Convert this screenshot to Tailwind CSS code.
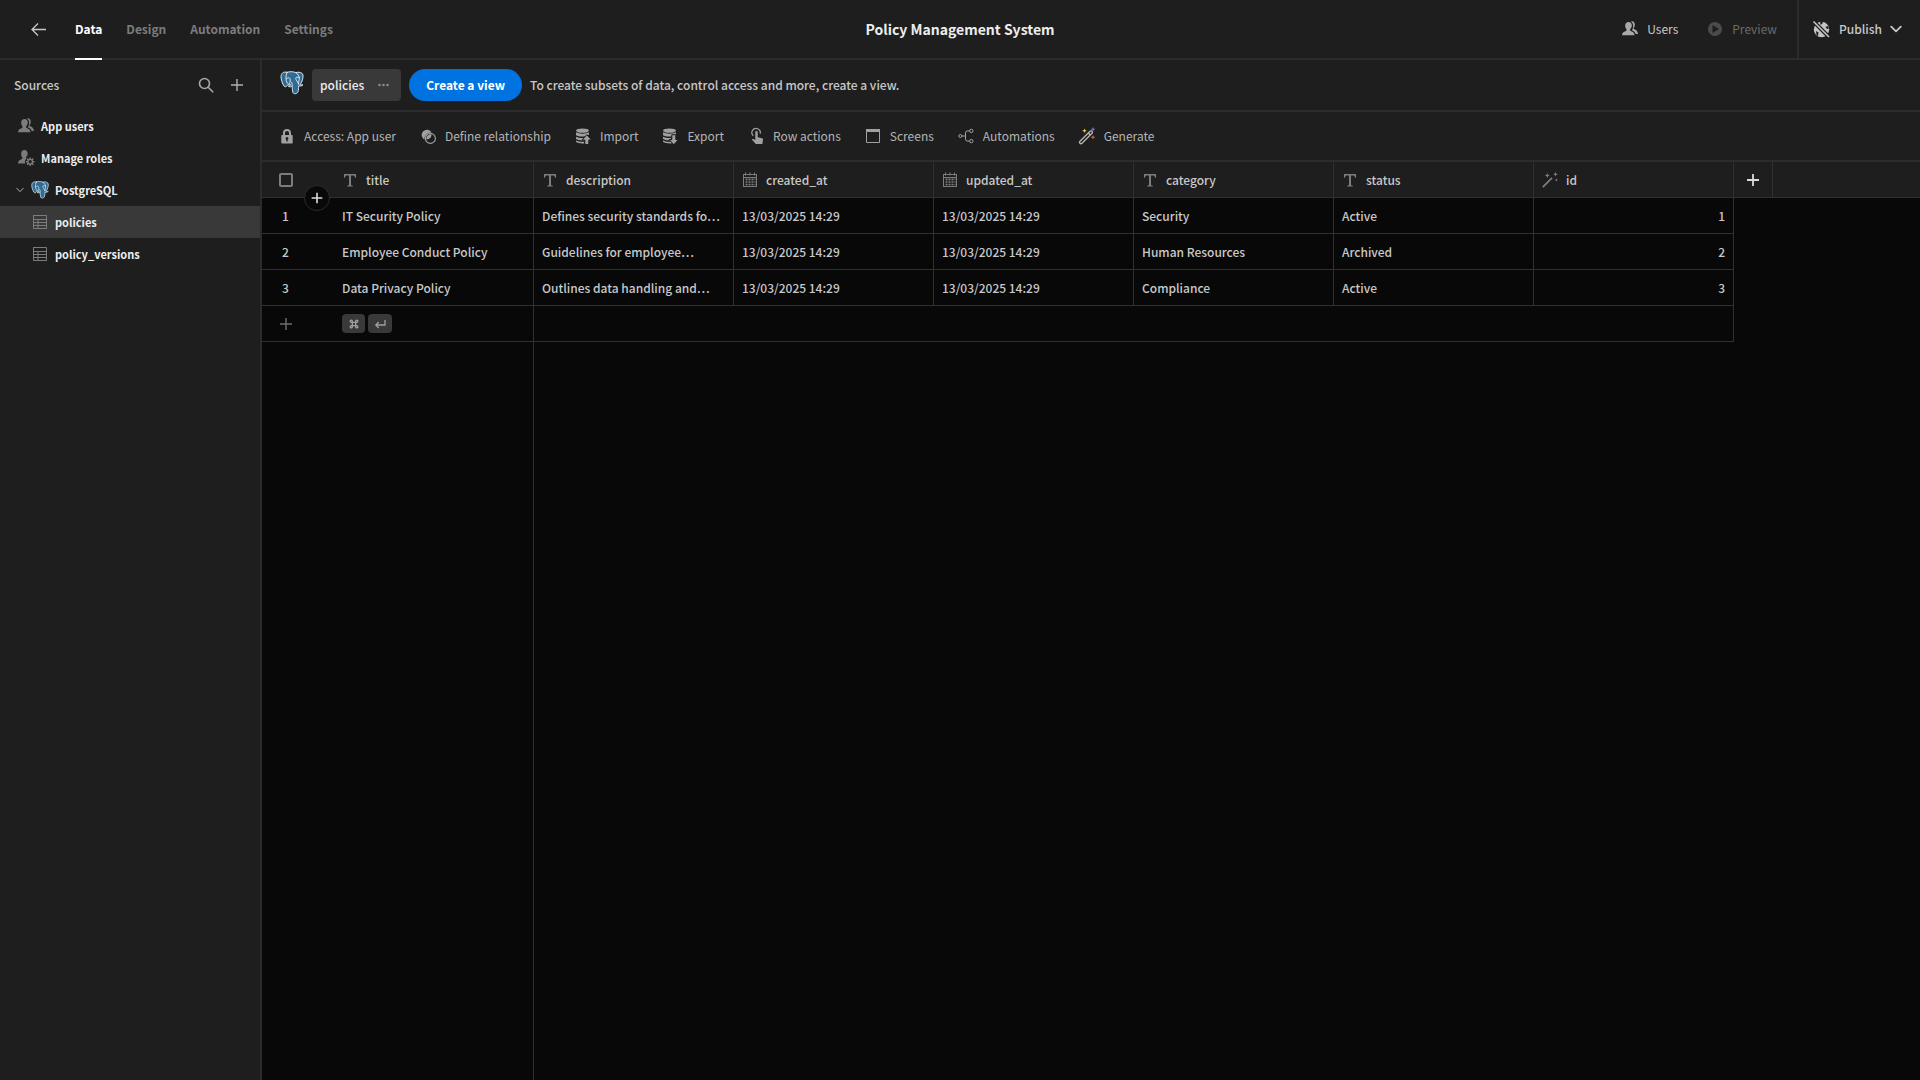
<!DOCTYPE html>
<html lang="en">
<head>
<meta charset="utf-8">
<title>Policy Management System</title>
<script src="https://cdn.jsdelivr.net/npm/@tailwindcss/browser@4"></script>
</head>
<body class="flex min-h-screen flex-col bg-[#080808] font-['Noto_Sans_CJK_SC','Noto_Sans',sans-serif] text-[12px] leading-5 text-[#c8c8c8]">
<svg class="hidden" aria-hidden="true">
  <defs>
    <symbol id="users" viewBox="0 0 18 18"><path fill="currentColor" d="M7.600 2C9.700 2 10.800 3.400 10.800 5.300c0 1.700-.7 2.900-1.500 3.800-.2.300-.3.500-.3.900 0 .5.200.8.700 1 2.300.8 3.700 1.800 3.800 4.300H1c.1-2.500 1.500-3.500 3.900-4.300.5-.2.700-.5.700-1 0-.4-.1-.6-.3-.9C4.500 8.200 4.200 7 4.200 5.300 4.200 3.400 5.500 2 7.600 2z"/><path fill="currentColor" d="M11 1.300c1.700 0 2.800 1.400 2.800 3.200 0 1.500-.4 2.600-1.100 3.400-.3.400-.2 1 .2 1.200 2.300.9 3.900 2.300 4.100 4.900h-2.400c-.4-1.900-1.800-3-3.700-3.800.7-1 1.200-2.400 1.200-4.500 0-1.900-.7-3.300-2-4 .3-.3.600-.4.900-.4z"/></symbol>
    <symbol id="roles" viewBox="0 0 18 18"><path fill="currentColor" d="M7.400 1C9.400 1 10.600 2.400 10.600 4.400c0 1.800-.7 3-1.500 3.800-.3.400-.2 1.200.4 1.400-1.500 1.300-1.900 3.200-1.300 5H1c.1-2.600 1.500-3.800 3.900-4.600.6-.3.700-1.200.3-1.700C4.500 7.400 4.200 6.200 4.200 4.400 4.200 2.400 5.400 1 7.400 1z"/><circle cx="13.200" cy="12.700" r="2.300" fill="none" stroke="currentColor" stroke-width="1.400"/><path stroke="currentColor" stroke-width="1.500" d="M13.200 8.400v1.600M13.200 15.400V17M8.900 12.700h1.600M15.900 12.700h1.600M10.100 9.600l1.200 1.200M15.100 14.600l1.200 1.200M10.100 15.800l1.200-1.200M15.100 10.800l1.200-1.200"/></symbol>
    <symbol id="elephant" viewBox="0 0 24 24"><g fill="#2f6c94" stroke="#dce6ec" stroke-width="1" stroke-linejoin="round" stroke-linecap="round"><path d="M7.200 1.300C3.200.2 1 2.400 1 5.800c0 2.500 1.500 7.400 3 9.200.9 1.100 1.900 1 2.700.1l1.700-1.900c.7.500 1.400.6 2.400.5-.9 1-1.700 1.200-2.600 1.400 1.200 1.200 3.300.9 4-.3.100 2.600.1 5 .7 6.700.6 1.700 4.200 1.700 5.100-.7.500-1.500.4-4.100.7-6 1.500.5 3.300.1 4.300-1-1.100.3-2.100.1-2.700-.5 1.900-2.500 3-6.500 2.700-9.300C22.600 1.400 18.500.6 15.800 1.600 13 .4 9.700.4 7.200 1.300z"/><path fill="none" d="M7.200 1.300C5.800 3.500 6 5.800 6.100 8c.1 2.200.6 3.800 2.300 5.200M15.800 1.600c2.900 1.700 3.800 4.200 3.500 6.500-.2 1.900-1 3.100-.6 5.100M6.400 7.600c1.500-1.100 3.200-1.100 3.600.1.500 1.600.3 3-.5 4.700M19.200 6.400c-1.700-.4-3.600-.3-3.500.9.100 1.500 1.800 3.100 2.900 5.800M12.200 14.300c.1-1.500 0-2.200-.8-3.100"/></g></symbol>
    <symbol id="sheet" viewBox="0 0 18 18"><path fill="none" stroke="currentColor" d="M2 2.500h13.500v13H2.500v-13M2.500 6.500h13M2.500 9.500h13M2.500 12.500h13M7 6.500v9"/></symbol>
    <symbol id="lock" viewBox="0 0 18 18"><path fill="currentColor" fill-rule="evenodd" d="M5 8V6a4 4 0 0 1 8 0v2h1a.7.700 0 0 1 .7.700v7a.7.700 0 0 1-.7.700H4a.7.700 0 0 1-.7-.7v-7A.7.700 0 0 1 4 8zm2 0h4V6a2 2 0 0 0-4 0zm1.300 4.700v1.900h1.400v-1.900a1.400 1.400 0 1 0-1.400 0z"/></symbol>
    <symbol id="relation" viewBox="0 0 18 18"><path fill="currentColor" d="M12.700 5.600A5.300 5.300 0 1 0 5.600 12.700 6.300 6.300 0 0 1 12.700 5.600z"/><circle cx="11.400" cy="11.400" r="5" fill="none" stroke="currentColor" stroke-width="1.100"/><path fill="currentColor" d="M12.500 7.300c.2 2.900-2.200 5.300-5.100 5.200-.4-3 2-5.400 5.100-5.200z"/></symbol>
    <symbol id="import" viewBox="0 0 18 18"><ellipse cx="8.500" cy="3.600" rx="6.500" ry="2.200" fill="currentColor"/><path fill="currentColor" d="M2 5.300c3 1.900 10 1.900 13 0v2.200c-2 2-9 3-13 .8zM2 9.700c2 1.100 5 1.400 8 1.200v2.300c-2.800.3-6.200 0-8-1.100zM2 13.500c2.200 1.100 5 1.400 8 1.200v1.700c-3.500.2-6.800-.2-8-1.600z"/><path fill="currentColor" stroke="#1e1e1e" d="m12.800 7.700 4.700 5.300h-2.700v4.500h-4V13H8.100z"/></symbol>
    <symbol id="export" viewBox="0 0 18 18"><ellipse cx="8.500" cy="3.600" rx="6.500" ry="2.200" fill="currentColor"/><path fill="currentColor" d="M2 5.300c3 1.900 10 1.900 13 0v2.200c-2 2-9 3-13 .8zM2 9.700c2 1.100 5 1.400 8 1.200v2.300c-2.800.3-6.200 0-8-1.100zM2 13.500c2.200 1.100 5 1.400 8 1.200l1.500 1.600c-3.500.3-8.300-.1-9.500-1.500z"/><path fill="currentColor" stroke="#1e1e1e" d="M10.800 7.700h4v4.800h2.700L12.800 17.800 8.100 12.500h2.700z"/></symbol>
    <symbol id="tap" viewBox="0 0 18 18"><path fill="none" stroke="currentColor" stroke-width="1.200" d="M6.300 8.800A4.200 4.200 0 1 1 13.200 6.600"/><path fill="currentColor" d="M8.300 5.200a1.200 1.200 0 0 1 2.400 0v5l4.300 1c.8.200 1.100.8 1 1.600l-.6 4.200H8.800l-3.600-3.900c-.5-.8.300-1.500 1.100-1.100l2 1z"/></symbol>
    <symbol id="screen" viewBox="0 0 18 18"><path fill="none" stroke="currentColor" d="M2.500 3v12.500h13V3"/><path fill="currentColor" d="M2 2h14v3H2z"/></symbol>
    <symbol id="flow" viewBox="0 0 18 18"><g fill="none" stroke="currentColor"><circle cx="3.300" cy="9" r="1.500"/><circle cx="14.300" cy="3.900" r="1.700"/><circle cx="14.300" cy="14.100" r="1.700"/><path d="M4.800 9h3.700M12.600 3.900H10.500q-2 0-2 2v6.200q0 2 2 2h2.100"/></g></symbol>
    <symbol id="generate" viewBox="0 0 18 18"><path fill="none" stroke="#b8b8b8" stroke-width="1.300" d="M2 14.300 12 4.300a1.300 1.300 0 0 1 2 2L4 16.300a1.400 1.400 0 0 1-2-2zM10.300 6l2 2"/><path fill="#e8c53a" d="m6.500 1.500.7 1.600 1.600.7-1.600.7-.7 1.600-.7-1.600-1.600-.7 1.600-.7z"/><path fill="#7070e8" d="m15 0 .7 1.600 1.600.7-1.600.7L15 4.600 14.300 3l-1.600-.7 1.600-.7z"/><path fill="#e8553f" d="m15 8 .7 1.600 1.600.7-1.600.7-.7 1.600-.7-1.600-1.600-.7 1.600-.7z"/></symbol>
    <symbol id="text" viewBox="0 0 18 18"><path fill="currentColor" d="M3 3h12v3.700h-1c-.2-1.600-.7-2.200-2-2.200h-2v9c0 .8.400 1 1.700 1.100v.9H6.300v-.9c1.300-.1 1.700-.3 1.700-1.100v-9H6c-1.300 0-1.800.6-2 2.200H3z"/></symbol>
    <symbol id="calendar" viewBox="0 0 18 18"><path fill="none" stroke="currentColor" d="M2 3.500h14M2 6.500h14M2.500 3.500V16M15.500 3.500V16M2 15.500h14M4.500 1.500v3M9 1.500v3M13.500 1.500v3"/><path fill="none" stroke="currentColor" stroke-width="1.700" stroke-dasharray="2 1" d="M4.500 8.400h10M4.500 11h10M4.500 13.500h10"/></symbol>
    <symbol id="wand" viewBox="0 0 18 18"><path stroke="currentColor" stroke-width="1.800" d="M1.800 16.200 11 6.800"/><path fill="currentColor" d="m6.300 2 .8 1.700 1.700.8-1.700.7-.8 1.700-.7-1.700-1.700-.7 1.700-.8zM14.500 1l.7 1.600 1.600.7-1.600.7-.7 1.600-.7-1.600-1.600-.7 1.600-.7zM15.300 7.300l.5 1.100 1.100.5-1.100.5-.5 1.100-.5-1.100-1.100-.5 1.100-.5z"/></symbol>
    <symbol id="plus" viewBox="0 0 18 18"><path stroke="currentColor" stroke-width="1.800" d="M3 9h12M9 3v12"/></symbol>
    <symbol id="plus-thin" viewBox="0 0 18 18"><path stroke="currentColor" stroke-width="1.400" d="M3 9h12M9 3v12"/></symbol>
    <symbol id="chevron" viewBox="0 0 10 10"><path fill="none" stroke="currentColor" stroke-width="1.500" stroke-linecap="round" stroke-linejoin="round" d="m1 3 4 4 4-4"/></symbol>
  </defs>
</svg>

<header class="grid grid-cols-[1fr_auto_1fr] border-b-2 border-[#2c2c2c] bg-[#1e1e1e]">
  <div class="flex h-[58px] items-center gap-[27px] pl-[30px]">
    <button aria-label="Back"><svg class="size-[18px]" viewBox="0 0 18 18" fill="none" stroke="#c8c8c8" stroke-width="1.300"><path d="M16 9.500H2M8 3.500l-6 6 6 6"/></svg></button>
    <nav class="flex gap-6 self-stretch text-[12px] font-bold text-[#7c7c7c]">
      <a href="#" class="-mb-[2px] flex items-center border-b-2 border-white text-white">Data</a>
      <a href="#" class="flex items-center">Design</a>
      <a href="#" class="flex items-center">Automation</a>
      <a href="#" class="flex items-center">Settings</a>
    </nav>
  </div>
  <h1 class="self-center text-[14px] font-bold text-[#ededed]">Policy Management System</h1>
  <div class="flex items-center justify-end">
    <button class="flex items-center gap-2"><svg class="size-[18px] text-[#a8a8a8]"><use href="#users"/></svg>Users</button>
    <button class="ml-7 flex items-center gap-2 text-[#6a6a6a]" disabled><svg class="size-[18px] text-[#4b4b4b]" viewBox="0 0 18 18"><path fill="currentColor" fill-rule="evenodd" d="M9 2a7 7 0 1 0 0 14A7 7 0 0 0 9 2zm-2.500 3 6.500 4-6.500 4z"/></svg>Preview</button>
    <button class="ml-5 flex items-center gap-2 self-stretch border-l-2 border-[#2c2c2c] pr-[18px] pl-3 font-medium">
      <svg class="size-5" viewBox="0 0 20 20"><circle cx="10.500" cy="10.500" r="7.700" fill="#c4c4c4"/><path fill="#1e1e1e" d="M9 2l3 .5-.5 2-2 1.500zM14.500 8l2-1 1.500 2.500-2 .5zM5 12l2.500 1.500-.5 3.500-1.500-1z"/><path stroke="#1e1e1e" stroke-width="4" d="M1 1l18 18"/><path stroke="#c4c4c4" stroke-width="1.600" d="M2.500 2.500l15.500 15.500"/></svg>
      Publish
      <svg class="size-3"><use href="#chevron"/></svg>
    </button>
  </div>
</header>

<div class="flex flex-1">
  <aside class="w-[262px] shrink-0 border-r-2 border-[#2c2c2c] bg-[#1e1e1e]">
    <div class="flex h-[50px] items-center pr-[14px] pl-[14px]">
      <h2 class="flex-1 font-medium">Sources</h2>
      <button aria-label="Search" class="mr-[13px]"><svg class="size-[18px]" viewBox="0 0 18 18" fill="none" stroke="#a8a8a8" stroke-width="1.600"><circle cx="7.500" cy="7.500" r="5"/><path d="m11.200 11.200 5 5"/></svg></button>
      <button aria-label="Add source" class="text-[#b0b0b0]"><svg class="size-[18px]"><use href="#plus-thin"/></svg></button>
    </div>
    <nav class="text-[11px] font-bold text-[#ededed]">
      <a href="#" class="flex h-8 items-center gap-[6px] pl-[17px]"><svg class="size-[18px] text-[#7c7c7c]"><use href="#users"/></svg>App users</a>
      <a href="#" class="flex h-8 items-center gap-[6px] pl-[17px]"><svg class="size-[18px] text-[#7c7c7c]"><use href="#roles"/></svg>Manage roles</a>
      <a href="#" class="flex h-8 items-center gap-[6px] pl-4"><svg class="size-2 text-[#7c7c7c]"><use href="#chevron"/></svg><svg class="ml-[1px] size-[18px]"><use href="#elephant"/></svg>PostgreSQL</a>
      <a href="#" class="flex h-8 items-center gap-[6px] bg-[#393939] pl-[31px]"><svg class="size-[18px] text-[#7c7c7c]"><use href="#sheet"/></svg>policies</a>
      <a href="#" class="flex h-8 items-center gap-[6px] pl-[31px]"><svg class="size-[18px] text-[#7c7c7c]"><use href="#sheet"/></svg>policy_versions</a>
    </nav>
  </aside>

  <main class="flex min-w-0 flex-1 flex-col">
    <div class="flex h-[52px] items-center gap-2 border-b-2 border-[#2c2c2c] bg-[#1e1e1e] pl-[18px] font-medium">
      <svg class="mb-1 size-6"><use href="#elephant"/></svg>
      <button class="flex h-8 items-center gap-[14px] rounded bg-[#393939] pr-3 pl-2 text-[#ededed]">policies<svg class="h-1 w-[11px]" viewBox="0 0 11 4" fill="#8a8a8a"><circle cx="1.500" cy="2" r="1.300"/><circle cx="5.500" cy="2" r="1.300"/><circle cx="9.500" cy="2" r="1.300"/></svg></button>
      <button class="h-8 rounded-full bg-[#0073e0] px-[17px] font-bold text-white">Create a view</button>
      <p>To create subsets of data, control access and more, create a view.</p>
    </div>
    <div class="flex h-[50px] items-center gap-[23px] border-b-2 border-[#2c2c2c] bg-[#1e1e1e] pl-4 text-[#b4b4b4]">
      <button class="flex items-center gap-2"><svg class="size-[18px] text-[#a0a0a0]"><use href="#lock"/></svg>Access: App user</button>
      <button class="flex items-center gap-2"><svg class="size-[18px] text-[#a0a0a0]"><use href="#relation"/></svg>Define relationship</button>
      <button class="flex items-center gap-2"><svg class="size-[18px] text-[#a0a0a0]"><use href="#import"/></svg>Import</button>
      <button class="flex items-center gap-2"><svg class="size-[18px] text-[#a0a0a0]"><use href="#export"/></svg>Export</button>
      <button class="flex items-center gap-2"><svg class="size-[18px] text-[#a0a0a0]"><use href="#tap"/></svg>Row actions</button>
      <button class="flex items-center gap-2"><svg class="size-[18px] text-[#a0a0a0]"><use href="#screen"/></svg>Screens</button>
      <button class="flex items-center gap-2"><svg class="size-[18px] text-[#a0a0a0]"><use href="#flow"/></svg>Automations</button>
      <button class="flex items-center gap-2"><svg class="size-[18px]"><use href="#generate"/></svg>Generate</button>
    </div>

    <div class="flex flex-1 flex-col overflow-x-auto">
      <table class="w-full min-w-[1511px] table-fixed border-separate border-spacing-0 text-left">
        <colgroup><col class="w-[72px]"><col class="w-[200px]"><col class="w-[200px]"><col class="w-[200px]"><col class="w-[200px]"><col class="w-[200px]"><col class="w-[200px]"><col class="w-[200px]"><col class="w-[39px]"><col></colgroup>
        <thead class="bg-[#1e1e1e] [&_th]:h-9 [&_th]:border-b [&_th]:border-[#303030] [&_th]:p-0 [&_th]:font-medium">
          <tr>
            <th class="relative"><input type="checkbox" aria-label="Select all rows" class="ml-[17px] block size-[14px] appearance-none rounded-[2px] border-2 border-[#7c7c7c]"><button aria-label="Insert row" class="absolute top-[23px] left-[42px] flex size-[26px] items-center justify-center rounded-full border border-[#2c2c2c] bg-[#080808] text-[#dcdcdc]"><svg class="size-4"><use href="#plus"/></svg></button></th>
            <th class="border-r"><div class="flex items-center gap-[7px] pl-[7px]"><svg class="size-[18px] text-[#7c7c7c]"><use href="#text"/></svg>title</div></th>
            <th class="border-r"><div class="flex items-center gap-[7px] pl-[7px]"><svg class="size-[18px] text-[#7c7c7c]"><use href="#text"/></svg>description</div></th>
            <th class="border-r"><div class="flex items-center gap-[7px] pl-[7px]"><svg class="size-[18px] text-[#7c7c7c]"><use href="#calendar"/></svg>created_at</div></th>
            <th class="border-r"><div class="flex items-center gap-[7px] pl-[7px]"><svg class="size-[18px] text-[#7c7c7c]"><use href="#calendar"/></svg>updated_at</div></th>
            <th class="border-r"><div class="flex items-center gap-[7px] pl-[7px]"><svg class="size-[18px] text-[#7c7c7c]"><use href="#text"/></svg>category</div></th>
            <th class="border-r"><div class="flex items-center gap-[7px] pl-[7px]"><svg class="size-[18px] text-[#7c7c7c]"><use href="#text"/></svg>status</div></th>
            <th class="border-r"><div class="flex items-center gap-[7px] pl-[7px]"><svg class="size-[18px] text-[#7c7c7c]"><use href="#wand"/></svg>id</div></th>
            <th class="border-r"><button aria-label="Add column" class="mx-auto block text-[#dcdcdc]"><svg class="size-[18px]"><use href="#plus"/></svg></button></th>
            <th></th>
          </tr>
        </thead>
        <tbody class="font-medium [&_td]:h-9 [&_td]:border-[#303030] [&_td]:py-0">
          <tr>
            <td class="border-b pr-[25px] text-center">1</td>
            <td class="border-r border-b px-2">IT Security Policy</td>
            <td class="border-r border-b px-2">Defines security standards fo…</td>
            <td class="border-r border-b px-2">13/03/2025 14:29</td>
            <td class="border-r border-b px-2">13/03/2025 14:29</td>
            <td class="border-r border-b px-2">Security</td>
            <td class="border-r border-b px-2">Active</td>
            <td class="border-r border-b px-2 text-right">1</td>
          </tr>
          <tr>
            <td class="border-b pr-[25px] text-center">2</td>
            <td class="border-r border-b px-2">Employee Conduct Policy</td>
            <td class="border-r border-b px-2">Guidelines for employee…</td>
            <td class="border-r border-b px-2">13/03/2025 14:29</td>
            <td class="border-r border-b px-2">13/03/2025 14:29</td>
            <td class="border-r border-b px-2">Human Resources</td>
            <td class="border-r border-b px-2">Archived</td>
            <td class="border-r border-b px-2 text-right">2</td>
          </tr>
          <tr>
            <td class="border-b pr-[25px] text-center">3</td>
            <td class="border-r border-b px-2">Data Privacy Policy</td>
            <td class="border-r border-b px-2">Outlines data handling and…</td>
            <td class="border-r border-b px-2">13/03/2025 14:29</td>
            <td class="border-r border-b px-2">13/03/2025 14:29</td>
            <td class="border-r border-b px-2">Compliance</td>
            <td class="border-r border-b px-2">Active</td>
            <td class="border-r border-b px-2 text-right">3</td>
          </tr>
          <tr>
            <td class="border-b px-0"><button aria-label="Add row" class="ml-[15px] block text-[#6e6e6e]"><svg class="size-[18px]"><use href="#plus-thin"/></svg></button></td>
            <td class="border-r border-b px-2"><div class="flex gap-[3px]"><kbd class="flex h-[19px] w-[23px] items-center justify-center rounded bg-[#393939]"><svg class="size-[10px]" viewBox="0 0 12 12" fill="none" stroke="#a0a0a0" stroke-width="1.600"><path d="M4 4V2.800A1.300 1.300 0 1 0 2.800 4h6.400A1.300 1.300 0 1 0 8 2.800v6.400A1.300 1.300 0 1 0 9.200 8H2.800A1.300 1.300 0 1 0 4 9.200z"/></svg></kbd><kbd class="flex h-[19px] w-6 items-center justify-center rounded bg-[#393939]"><svg class="size-3" viewBox="0 0 12 12" fill="none" stroke="#a0a0a0" stroke-width="1.300"><path d="M11 2v5H2M4.800 4 1.800 7l3 3"/></svg></kbd></div></td>
            <td colspan="6" class="border-r border-b"></td>
          </tr>
        </tbody>
      </table>
      <div class="w-[272px] flex-1 border-r border-[#303030]"></div>
    </div>
  </main>
</div>
</body>
</html>
